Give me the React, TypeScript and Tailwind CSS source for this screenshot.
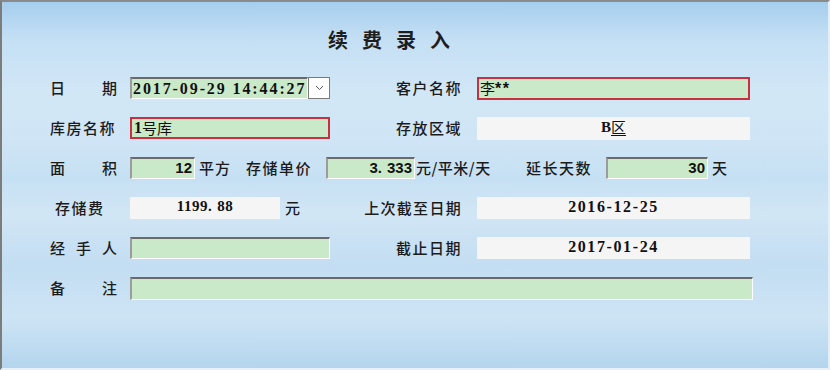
import React from "react";

const cjk = "font-['Noto_Sans_CJK_SC','Noto_Sans',sans-serif]";
const serif = "font-['Liberation_Serif','Noto_Sans_CJK_SC',serif]";
const sans = "font-['Liberation_Sans','Noto_Sans_CJK_SC',sans-serif]";

const sunken =
  "border-t-2 border-l-2 border-b border-r border-t-[#6a6a6a] border-l-[#9c9c9c] border-b-white border-r-white bg-[#c9e9c9]";
const redBox = "border-2 border-[#c8303f] bg-[#c9e9c9]";
const flat = "bg-[#f5f5f5]";
const label = `${cjk} text-[15px] font-medium text-[#1b1b1b] whitespace-nowrap`;

function Spread({ chars }: { chars: string[] }) {
  return (
    <div className={`w-[67px] mr-[13px] flex justify-between ${label}`}>
      {chars.map((c, i) => (
        <span key={i}>{c}</span>
      ))}
    </div>
  );
}

function RightLabel({ text }: { text: string }) {
  return <div className={`w-[147px] pr-[15px] flex justify-end tracking-[1.5px] ${label}`}>{text}</div>;
}

export default function App() {
  return (
    <div className="w-[830px] h-[370px] overflow-hidden border-l-2 border-t-2 border-r-2 border-b-2 border-l-[#7c7c7c] border-t-[#8a8a8a] border-r-[#e3eef8] border-b-[#e8f0f8] bg-[linear-gradient(180deg,#a6ceed_0%,#c4dff4_10%,#d2e7f6_25%,#cfe5f5_38%,#c6e0f3_48%,#d1e6f5_58%,#c3ddf2_72%,#cde4f4_86%,#b4d5ee_100%)]">
      <div className="pt-[24px] pl-[326px] h-[52px]">
        <div className={`flex gap-[14px] text-[20px] leading-[28px] font-semibold text-[#1e1e1e] ${cjk}`}>
          <span>续</span>
          <span>费</span>
          <span>录</span>
          <span>入</span>
        </div>
      </div>

      <div className="mt-[23px] pl-[48px] flex flex-col gap-[18px]">
        {/* Row 1 */}
        <div className="flex items-center h-[22px]">
          <Spread chars={["日", "期"]} />
          <div className={`w-[178px] h-[22px] ${sunken} flex items-center pl-[1px] overflow-hidden`}>
            <span className={`text-[16px] font-bold tracking-[1.9px] whitespace-nowrap text-[#111] ${serif}`}>
              2017-09-29 14:44:27
            </span>
          </div>
          <div className="w-[22px] h-[22px] bg-white border border-[#7a7a7a] flex items-center justify-center">
            <svg width="9" height="6" viewBox="0 0 9 6">
              <path d="M1 1 L4.5 4.5 L8 1" fill="none" stroke="#555" strokeWidth="1" />
            </svg>
          </div>
          <RightLabel text="客户名称" />
          <div className={`w-[273px] h-[23px] ${redBox} flex items-center pl-[1px]`}>
            <span className={`text-[15px] text-[#111] ${cjk}`}>李</span>
            <span className={`text-[16px] font-bold text-[#111] tracking-[1.5px] mt-[2px] ${sans}`}>**</span>
          </div>
        </div>

        {/* Row 2 */}
        <div className="flex items-center h-[22px]">
          <div className={`w-[80px] tracking-[1.5px] ${label}`}>库房名称</div>
          <div className={`w-[200px] h-[22px] ${redBox} flex items-center pl-[2px]`}>
            <span className={`text-[16px] font-bold text-[#111] ${serif}`}>1</span>
            <span className={`text-[15px] text-[#111] ${cjk}`}>号库</span>
          </div>
          <RightLabel text="存放区域" />
          <div className={`w-[273px] h-[23px] ${flat} flex justify-center items-start`}>
            <span className={`text-[15px] font-bold text-[#111] leading-[20px] ${serif}`}>B</span>
            <span className={`text-[15px] text-[#111] leading-[20px] underline underline-offset-2 ${cjk}`}>区</span>
          </div>
        </div>

        {/* Row 3 */}
        <div className="flex items-center h-[22px]">
          <Spread chars={["面", "积"]} />
          <div className={`w-[65px] h-[22px] ${sunken} flex items-center justify-end pr-[2px]`}>
            <span className={`text-[15px] font-bold text-[#111] ${sans}`}>12</span>
          </div>
          <div className={`w-[51px] pl-[4px] tracking-[1px] ${label}`}>平方</div>
          <div className={`w-[80px] tracking-[1.5px] ${label}`}>存储单价</div>
          <div className={`w-[89px] h-[22px] ${sunken} flex items-center justify-end pr-[2px]`}>
            <span className={`text-[15px] font-bold text-[#111] whitespace-nowrap ${sans}`}>
              3<span className="mr-[5px]">.</span>333
            </span>
          </div>
          <div className={`w-[111px] pl-[1px] tracking-[0.5px] ${label}`}>元/平米/天</div>
          <div className={`w-[80px] tracking-[1.5px] ${label}`}>延长天数</div>
          <div className={`w-[102px] h-[22px] ${sunken} flex items-center justify-end pr-[2px]`}>
            <span className={`text-[15px] font-bold text-[#111] ${sans}`}>30</span>
          </div>
          <div className={`pl-[4px] ${label}`}>天</div>
        </div>

        {/* Row 4 */}
        <div className="flex items-center h-[22px]">
          <div className={`w-[80px] pl-[5px] tracking-[1.5px] ${label}`}>存储费</div>
          <div className={`w-[150px] h-[22px] ${flat} flex justify-center`}>
            <span className={`text-[15px] font-bold text-[#111] leading-[19px] whitespace-nowrap tracking-[0.5px] ${serif}`}>
              1199<span className="mr-[5px]">.</span>88
            </span>
          </div>
          <div className={`w-[50px] pl-[5px] ${label}`}>元</div>
          <div className={`w-[147px] pr-[15px] flex justify-end tracking-[1.3px] ${label}`}>上次截至日期</div>
          <div className={`w-[273px] h-[22px] ${flat} flex justify-center`}>
            <span className={`text-[16px] font-bold text-[#111] leading-[19px] tracking-[1.6px] ${serif}`}>
              2016-12-25
            </span>
          </div>
        </div>

        {/* Row 5 */}
        <div className="flex items-center h-[22px]">
          <Spread chars={["经", "手", "人"]} />
          <div className={`w-[200px] h-[22px] ${sunken}`} />
          <RightLabel text="截止日期" />
          <div className={`w-[273px] h-[22px] ${flat} flex justify-center`}>
            <span className={`text-[16px] font-bold text-[#111] leading-[19px] tracking-[1.6px] ${serif}`}>
              2017-01-24
            </span>
          </div>
        </div>

        {/* Row 6 */}
        <div className="flex items-center h-[22px]">
          <Spread chars={["备", "注"]} />
          <div className={`w-[623px] h-[23px] ${sunken}`} />
        </div>
      </div>
    </div>
  );
}
